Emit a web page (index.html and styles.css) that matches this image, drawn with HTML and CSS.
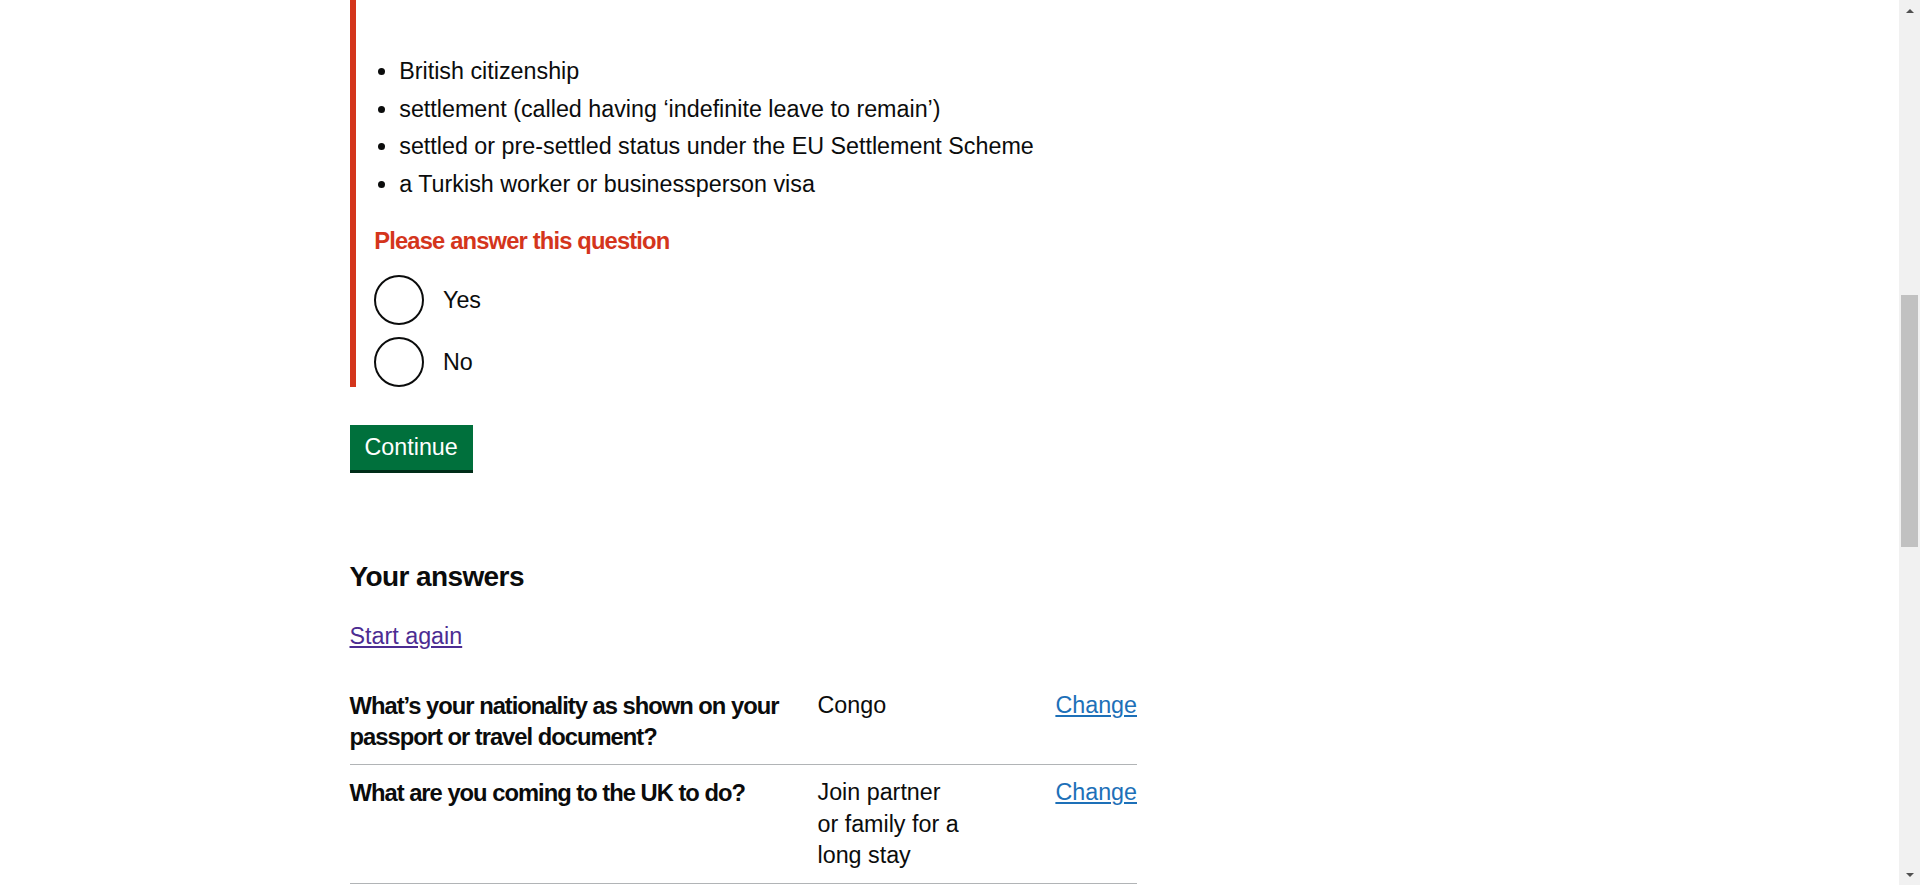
FILE: index.html
```
<!DOCTYPE html>
<html lang="en">
<head>
<meta charset="utf-8">
<title>Check if you need a UK visa</title>
<link rel="stylesheet" href="styles.css">
</head>
<body>
<div class="page">
  <main class="main">
    <div class="container">
      <div class="column">
        <form class="question-form">
          <div class="form-group form-group--error">
            <ul class="list">
              <li>British citizenship</li>
              <li>settlement (called having ‘indefinite leave to remain’)</li>
              <li>settled or pre-settled status under the EU Settlement Scheme</li>
              <li>a Turkish worker or businessperson visa</li>
            </ul>
            <p class="error-message">Please answer this question</p>
            <div class="radios">
              <div class="radio">
                <input class="radio__input" type="radio" id="answer-yes" name="answer" value="yes">
                <label class="radio__label" for="answer-yes">Yes</label>
              </div>
              <div class="radio">
                <input class="radio__input" type="radio" id="answer-no" name="answer" value="no">
                <label class="radio__label" for="answer-no">No</label>
              </div>
            </div>
          </div>
          <button class="button" type="submit">Continue</button>
        </form>

        <h2 class="heading">Your answers</h2>
        <p class="body"><a class="link link--visited" href="#">Start again</a></p>

        <dl class="summary">
          <div class="summary__row">
            <dt class="summary__key">What’s your nationality as shown on your passport or travel document?</dt>
            <dd class="summary__value">Congo</dd>
            <dd class="summary__actions"><a class="link" href="#">Change</a></dd>
          </div>
          <div class="summary__row">
            <dt class="summary__key">What are you coming to the UK to do?</dt>
            <dd class="summary__value">Join partner or family for a long stay</dd>
            <dd class="summary__actions"><a class="link" href="#">Change</a></dd>
          </div>
        </dl>
      </div>
    </div>
  </main>
  <div class="scrollbar" aria-hidden="true">
    <div class="scrollbar__button"><span class="scrollbar__arrow scrollbar__arrow--up"></span></div>
    <div class="scrollbar__track"><div class="scrollbar__thumb"></div></div>
    <div class="scrollbar__button"><span class="scrollbar__arrow scrollbar__arrow--down"></span></div>
  </div>
</div>
</body>
</html>
```

FILE: styles.css
```
html, body {
  margin: 0;
  padding: 0;
  background: #ffffff;
}

body {
  font-family: "Liberation Sans", Arial, sans-serif;
  color: #0b0c0c;
  font-size: 23.3px;
  line-height: 31.25px;
}

.page {
  display: flex;
  height: 885px;
  overflow: hidden;
}

.main {
  flex: 1;
  min-width: 0;
}

.container {
  width: 1200px;
  margin: 0 auto;
}

.column {
  width: 787.5px;
}

.question-form {
  margin: 0 0 88.5px;
}

.form-group {
  margin-bottom: 37.5px;
}

.form-group--error {
  border-left: 6.25px solid #d4351c;
  padding-left: 18.75px;
  padding-top: 56px;
}

.list {
  margin: 0 0 25px;
  padding-left: 25px;
  list-style: disc;
}

.list li {
  margin-bottom: 6.25px;
}

.error-message {
  margin: 0 0 18.75px;
  color: #d4351c;
  font-size: 23.75px;
  font-weight: 700;
  letter-spacing: -0.85px;
}

.radios {
  display: flex;
  flex-direction: column;
  gap: 12.5px;
}

.radio {
  display: flex;
  align-items: flex-start;
  min-height: 50px;
}

.radio__input {
  -webkit-appearance: none;
  appearance: none;
  box-sizing: border-box;
  width: 50px;
  height: 50px;
  margin: 0;
  border: 2.5px solid #0b0c0c;
  border-radius: 50%;
  background: #ffffff;
  flex: none;
}

.radio__label {
  padding: 10px 18.75px 6.25px;
}

.button {
  display: block;
  box-sizing: border-box;
  height: 45px;
  margin: 0;
  padding: 0 15px;
  border: 0;
  border-radius: 0;
  background: #00703c;
  box-shadow: 0 3px 0 #002d18;
  color: #ffffff;
  font-family: inherit;
  font-size: 23.3px;
  line-height: 45px;
  cursor: pointer;
}

.heading {
  margin: 0 0 25px;
  font-size: 28px;
  line-height: 37.5px;
  font-weight: 700;
  letter-spacing: -0.6px;
}

.body {
  margin: 0 0 25.25px;
}

.link {
  color: #1d70b8;
  text-decoration: underline;
  text-decoration-thickness: 1.5px;
  text-underline-offset: 2px;
}

.link--visited {
  color: #4c2c92;
}

.summary {
  margin: 0;
}

.summary__row {
  display: grid;
  grid-template-columns: 468px 172px 1fr;
  border-bottom: 1px solid #b1b4b6;
}

.summary__key,
.summary__value,
.summary__actions {
  margin: 0;
  padding: 12.5px 25px 11.5px 0;
}

.summary__key {
  font-size: 23.75px;
  font-weight: 700;
  letter-spacing: -1px;
}

.summary__actions {
  padding-right: 0;
  text-align: right;
}

.scrollbar {
  flex: none;
  width: 21px;
  height: 885px;
  background: #f1f1f1;
  display: flex;
  flex-direction: column;
}

.scrollbar__button {
  height: 21px;
  display: flex;
  align-items: center;
  justify-content: center;
  flex: none;
}

.scrollbar__arrow {
  width: 0;
  height: 0;
  border-left: 4.5px solid transparent;
  border-right: 4.5px solid transparent;
}

.scrollbar__arrow--up {
  border-bottom: 4.5px solid #505050;
}

.scrollbar__arrow--down {
  border-top: 4.5px solid #505050;
}

.scrollbar__track {
  flex: 1;
  padding: 0 2px;
}

.scrollbar__thumb {
  margin-top: 274px;
  height: 252px;
  background: #c1c1c1;
}
```
